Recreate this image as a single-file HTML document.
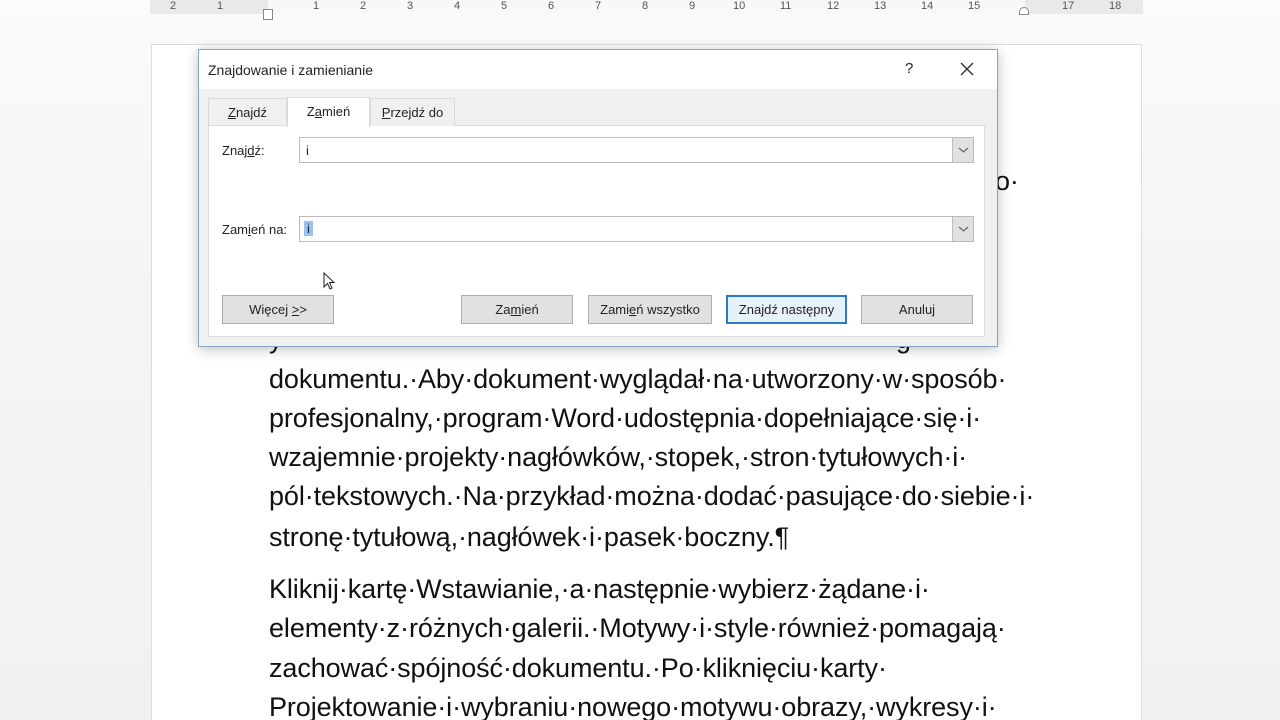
<!DOCTYPE html>
<html><head><meta charset="utf-8"><style>
*{margin:0;padding:0;box-sizing:border-box}
html,body{width:1280px;height:720px;overflow:hidden}
body{background:linear-gradient(#fbfbfb,#f4f4f4 300px,#f1f1f1);font-family:"Liberation Sans",sans-serif;position:relative}
.ruler{position:absolute;left:150px;top:0;width:993px;height:14px;background:#e9e9e9}
.ruler .w{position:absolute;left:118px;top:0;width:757px;height:14px;background:#f8f8f8}
.ruler span{position:absolute;top:0;font-size:11px;color:#555;line-height:13px}
.page{position:absolute;left:151px;top:44px;width:991px;height:676px;background:#fff;border:1px solid #ddd;border-bottom:none}
.doc{position:absolute;left:269px;font-size:27px;color:#111;white-space:nowrap;line-height:40px;letter-spacing:-0.1px}
.dlg{position:absolute;left:198px;top:49px;width:800px;height:298px;background:#f0f0f0;border:1px solid #8aa4c0;box-shadow:0 2px 12px rgba(0,0,0,.25)}
.tb{position:absolute;left:0;top:0;width:798px;height:39px;background:#fff}
.dlg .t{position:absolute;font-size:13px;color:#222;white-space:nowrap}
.tab{position:absolute;top:48px;height:28px;border:1px solid #d9d9d9;border-bottom:none;font-size:13px;text-align:center;line-height:28px;color:#222}
.panel{position:absolute;left:9px;top:75px;width:777px;height:212px;background:#fff;border:1px solid #dcdcdc}
.inp{position:absolute;left:100px;width:675px;height:26px;background:#fff;border:1px solid #bbb}
.inp .dd{position:absolute;right:0;top:0;width:21px;height:24px;background:#e1e1e1;border-left:1px solid #bbb}
.btn{position:absolute;top:245px;height:29px;background:#e1e1e1;border:1px solid #adadad;font-size:13px;text-align:center;line-height:27px;color:#222}
u{text-decoration:underline}
</style></head><body>
<div class="ruler"><div class="w"></div>
<span style="left:20px">2</span><span style="left:67px">1</span>
<span style="left:163px">1</span><span style="left:210px">2</span><span style="left:257px">3</span><span style="left:304px">4</span><span style="left:351px">5</span><span style="left:398px">6</span><span style="left:445px">7</span><span style="left:492px">8</span><span style="left:539px">9</span><span style="left:583px">10</span><span style="left:630px">11</span><span style="left:677px">12</span><span style="left:724px">13</span><span style="left:771px">14</span><span style="left:818px">15</span><span style="left:912px">17</span><span style="left:959px">18</span>
</div>
<div style="position:absolute;left:263px;top:9px;width:10px;height:11px;border:1px solid #888;background:#fff"></div>
<div style="position:absolute;left:1019px;top:7px;width:10px;height:8px;border:1px solid #888;border-radius:5px 5px 0 0;background:#fff"></div>
<div class="page"></div>
<div class="doc" style="top:161px;left:995px">o·</div>
<div class="doc" style="top:319px">y·····································································g</div>
<div class="doc" style="top:359px">dokumentu.·Aby·dokument·wyglądał·na·utworzony·w·sposób·</div>
<div class="doc" style="top:398px">profesjonalny,·program·Word·udostępnia·dopełniające·się·i·</div>
<div class="doc" style="top:437px">wzajemnie·projekty·nagłówków,·stopek,·stron·tytułowych·i·</div>
<div class="doc" style="top:476px">pól·tekstowych.·Na·przykład·można·dodać·pasujące·do·siebie·i·</div>
<div class="doc" style="top:517px">stronę·tytułową,·nagłówek·i·pasek·boczny.¶</div>
<div class="doc" style="top:569px">Kliknij·kartę·Wstawianie,·a·następnie·wybierz·żądane·i·</div>
<div class="doc" style="top:608px">elementy·z·różnych·galerii.·Motywy·i·style·również·pomagają·</div>
<div class="doc" style="top:648px">zachować·spójność·dokumentu.·Po·kliknięciu·karty·</div>
<div class="doc" style="top:687px">Projektowanie·i·wybraniu·nowego·motywu·obrazy,·wykresy·i·</div>
<div class="dlg">
<div class="tb"></div>
<div class="t" style="left:9px;top:12px;font-size:14px">Znajdowanie i zamienianie</div>
<div class="t" style="left:706px;top:10px;font-size:15px">?</div>
<svg style="position:absolute;left:761px;top:12px" width="14" height="14"><path d="M1 1L13 13M13 1L1 13" stroke="#333" stroke-width="1.4"/></svg>
<div class="tab" style="left:9px;width:79px;background:#f0f0f0"><u>Z</u>najdź</div>
<div class="panel"></div>
<div class="tab" style="left:88px;width:83px;top:47px;height:30px;background:#fff;border-color:#dcdcdc">Z<u>a</u>mień</div>
<div class="tab" style="left:171px;width:85px;background:#f0f0f0"><u>P</u>rzejdź do</div>
<div class="t" style="left:23px;top:93px">Znaj<u>d</u>ź:</div>
<div class="inp" style="top:87px"><span class="t" style="left:6px;top:5px">i</span><div class="dd"><svg width="21" height="24"><path d="M6 10l4.5 4 4.5-4" fill="none" stroke="#666" stroke-width="1.2"/></svg></div></div>
<div class="t" style="left:23px;top:172px">Zam<u>i</u>eń na:</div>
<div class="inp" style="top:166px"><span class="t" style="left:4px;top:4px;background:#99c1f0;padding:0 3px">i</span><div class="dd"><svg width="21" height="24"><path d="M6 10l4.5 4 4.5-4" fill="none" stroke="#666" stroke-width="1.2"/></svg></div></div>
<svg style="position:absolute;left:124px;top:222px" width="14" height="20"><path d="M1 1L1 15L4.5 11.5L7 17L9 16L6.5 10.5L11 10.5Z" fill="#fff" stroke="#222" stroke-width="1"/></svg>
<div class="btn" style="left:23px;width:112px">Więcej <u>&gt;</u>&gt;</div>
<div class="btn" style="left:262px;width:112px">Za<u>m</u>ień</div>
<div class="btn" style="left:389px;width:124px">Zami<u>e</u>ń wszystko</div>
<div class="btn" style="left:527px;width:121px;background:#e5f1fb;border:2px solid #2f78c4;line-height:25px">Zna<u>j</u>dź następny</div>
<div class="btn" style="left:662px;width:112px">Anuluj</div>
</div>
</body></html>
